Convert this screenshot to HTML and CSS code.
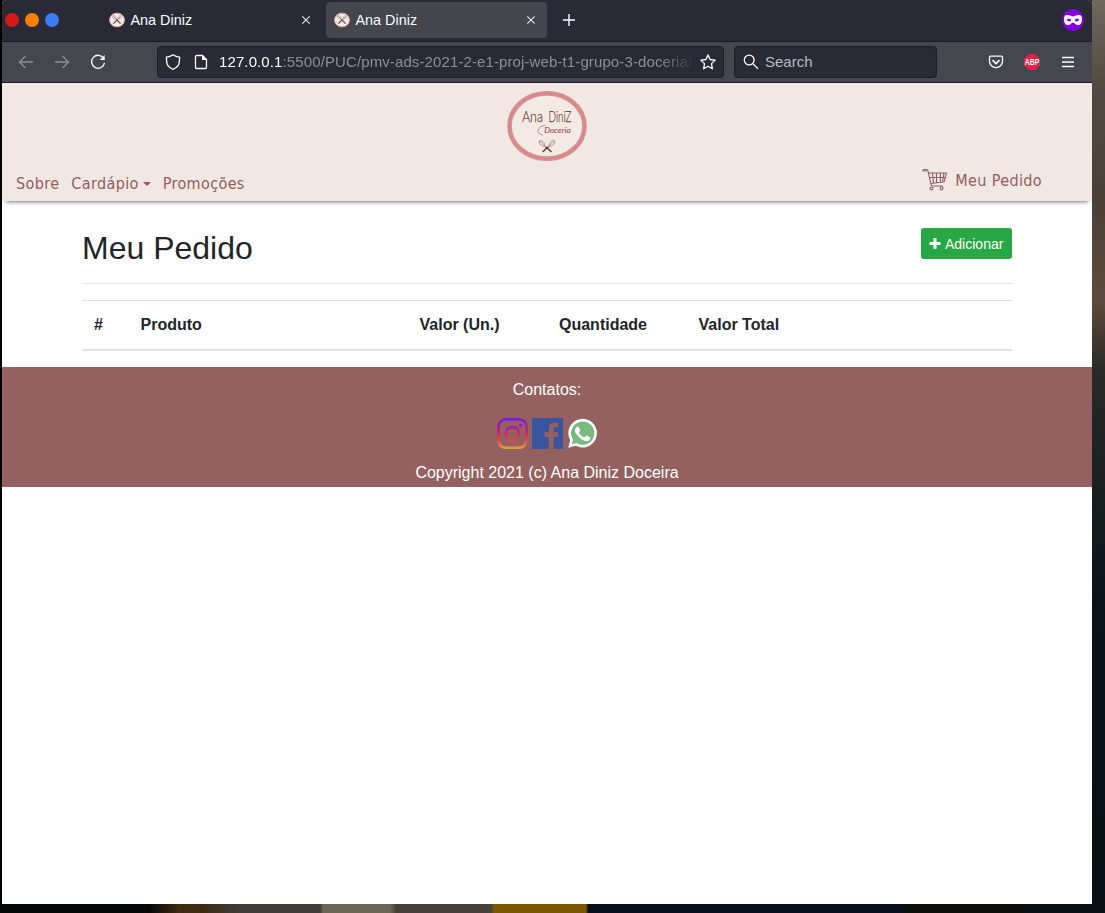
FILE: index.html
```html
<!DOCTYPE html>
<html lang="pt-BR">
<head>
<meta charset="utf-8">
<title>Ana Diniz</title>
<link rel="stylesheet" href="styles.css">
</head>
<body>
<svg class="defs" width="0" height="0">
  <symbol id="whisks" viewBox="0 0 16 16">
    <ellipse cx="8" cy="8" rx="7.5" ry="6.9" fill="#f3e9e5" stroke="#d79a9c"/>
    <path d="M4.5 4.500l7 7M11.500 4.500l-7 7" stroke="#84696a" stroke-width=".8"/>
    <path d="M8 8l3.500 3.500M8 8l-3.500 3.500" stroke="#6d4a4b" stroke-width="1.100"/>
    <path d="M3.400 5.400q-.6-2.200 1.600-1.900 2 .6 2.300 3.700-3.100-.2-3.900-1.800zM12.600 5.400q.6-2.200-1.600-1.900-2 .6-2.300 3.700 3.100-.2 3.900-1.800z" fill="none" stroke="#b69b99" stroke-width=".7"/>
  </symbol>
  <symbol id="close" viewBox="0 0 10 10"><path d="M1.300 1.300l7.400 7.400M8.700 1.300l-7.400 7.400" stroke="#e8e8ea" stroke-width="1.100"/></symbol>
</svg>
<div class="window">
  <div class="tabs">
    <div class="controls"><i class="red"></i><i class="orange"></i><i class="blue"></i></div>
    <div class="tab"><svg class="favicon"><use href="#whisks"/></svg><span>Ana Diniz</span><svg class="close"><use href="#close"/></svg></div>
    <div class="tab active"><svg class="favicon"><use href="#whisks"/></svg><span>Ana Diniz</span><svg class="close"><use href="#close"/></svg></div>
    <svg class="plus" viewBox="0 0 12 12" width="12" height="12"><path d="M6 0v12M0 6h12" stroke="#fbfbfe" stroke-width="1.400"/></svg>
    <svg class="mask" viewBox="0 0 22 22" width="22" height="22"><circle cx="11" cy="11" r="11" fill="#8000d7"/><path fill-rule="evenodd" fill="#fff" d="M2.100 8.200Q2.300 6 5 6q3.200.1 6 1.400Q13.800 6.100 17 6q2.700 0 2.900 2.200.5 7.500-3.500 7.800-2.600.2-4.200-1.900-1.200-1.200-2.400 0Q8.200 16.200 5.600 16q-4-.3-3.500-7.800zM4.700 11q2.200 2.800 4.700.2Q7 7.800 4.700 11zM12.600 11.200q2.500 2.600 4.700-.2-2.300-3.200-4.700.2z"/></svg>
  </div>
  <div class="toolbar">
    <div class="history">
      <svg class="dim" viewBox="0 0 16 16"><path d="M15 8H1.500M7.500 2L1.500 8l6 6"/></svg>
      <svg class="dim" viewBox="0 0 16 16"><path d="M1 8h13.500M8.500 2l6 6-6 6"/></svg>
      <svg viewBox="0 0 16 16"><path d="M13.700 4.500A6.500 6.500 0 1 0 14.500 8.800"/><path d="M14.700 1v5H9.700z" fill="#fbfbfe" stroke="none"/></svg>
    </div>
    <div class="field address">
      <svg viewBox="0 0 16 16"><path d="M8 .8Q11 3 14.500 3.100q.4 7.500-2.800 10Q10 14.600 8 15.300q-2-.7-3.700-2.200-3.200-2.500-2.800-10Q5 3 8 .8z"/></svg>
      <svg viewBox="0 0 16 16"><path d="M3.500 1.500h6l4 4v7.800q0 1.200-1.200 1.200H3.700q-1.200 0-1.200-1.200V2.700q0-1.200 1-1.200z"/><path d="M9 1v5h5z" fill="#fbfbfe" stroke="none"/></svg>
      <span class="url"><b>127.0.0.1</b>:5500/PUC/pmv-ads-2021-2-e1-proj-web-t1-grupo-3-doceria/</span>
      <svg class="star" viewBox="0 0 16 16"><path d="M8 .9l2.100 4.600 5.100.6-3.700 3.500.9 5.200L8 12.300l-4.400 2.500.9-5.200L.8 6.100l5.100-.6z" stroke-linejoin="round"/></svg>
    </div>
    <div class="field search">
      <svg viewBox="0 0 16 16"><circle cx="6.200" cy="6" r="4.900"/><path d="M9.800 9.600l5.200 5.100"/></svg><span>Search</span>
    </div>
    <div class="actions">
      <svg viewBox="0 0 16 16"><path d="M2.500 2.200h11q1 0 1 1v4a6.500 6.500 0 0 1-13 0v-4q0-1 1-1z"/><path d="M4.500 6.200L8 9.500l3.500-3.300" stroke-width="1.700"/></svg>
      <svg viewBox="0 0 16 16"><path d="M4.700 0h6.600L16 4.700v6.600L11.300 16H4.700L0 11.300V4.700z" fill="#ed1e45" stroke="none"/><text x="8" y="11" text-anchor="middle" textLength="14.500" lengthAdjust="spacingAndGlyphs" class="abp">ABP</text></svg>
      <svg viewBox="0 0 16 16"><path d="M2 3.500h12M2 8h12M2 12.500h12" stroke-width="1.400"/></svg>
    </div>
  </div>
  <main class="page">
    <header class="site-header">
      <svg class="logo" viewBox="0 0 80 70" width="80" height="70">
        <ellipse cx="40" cy="35" rx="37.500" ry="32.700" fill="#f3eae5" stroke="#d98e90" stroke-width="4.700"/>
        <ellipse cx="40" cy="35" rx="37.500" ry="32.700" fill="none" stroke="#c67679" stroke-width=".9" stroke-dasharray="1 1.200"/>
        <text x="15" y="31" class="brand" textLength="21" lengthAdjust="spacingAndGlyphs">Ana</text>
        <text x="41.500" y="31" class="brand" textLength="23" lengthAdjust="spacingAndGlyphs">DiniZ</text>
        <path d="M38.500 34.500q-6 .5-7.500 4.500-.8 4 5 5" fill="none" stroke="#ae6267" stroke-width=".7"/>
        <text x="37" y="42" class="script" textLength="27" lengthAdjust="spacingAndGlyphs">Doceria</text>
        <g fill="none" stroke="#9b7774" stroke-width=".7"><path d="M32.500 50q-1.500 3 2.300 4.600l4.200 1.900q-2-6.400-4.500-7.200-1.500-.5-2 .7zM47.500 50q1.500 3-2.300 4.600L41 56.500q2-6.400 4.500-7.200 1.500-.5 2 .7zM33 50l6 6.500M47 50l-6 6.500"/></g>
        <path d="M39 56l5.500 5M41 56l-5.500 5" stroke="#653c3e" stroke-width="1.500"/>
      </svg>
      <nav>
        <a>Sobre</a><a>Cardápio<i class="caret"></i></a><a>Promoções</a>
        <a class="order"><svg class="cart" viewBox="0 0 26 22" width="26" height="22" fill="none" stroke="#935c60" stroke-width="1.100"><path d="M5 2H1.500Q.4 1 1.500.5H4q1.500 0 2 1.500l3 13.500q.3 1.500 1.500 1.500H21M6 4h18.500L22.200 12.700 8.500 14.500M7 8.500h16M10.500 4l1 10M14.500 4v9.500M18.500 4v9M22 4l-1.500 8.700"/><circle cx="9.500" cy="19.500" r="1.500"/><circle cx="19.500" cy="19.500" r="1.500"/></svg>Meu Pedido</a>
      </nav>
    </header>
    <section class="content">
      <div class="heading"><h2>Meu Pedido</h2><button><svg viewBox="0 0 11 11" width="12" height="11"><path d="M4 0h3v4h4v3H7v4H4V7H0V4h4z" fill="#fff"/></svg>Adicionar</button></div>
      <table>
        <colgroup><col class="c5"><col class="c30"><col class="c15"><col class="c15"><col class="c15"><col></colgroup>
        <thead><tr><th>#</th><th>Produto</th><th>Valor (Un.)</th><th>Quantidade</th><th>Valor Total</th><th></th></tr></thead>
      </table>
    </section>
    <footer>
      <p>Contatos:</p>
      <div class="social">
        <svg viewBox="0 0 31 31"><defs><linearGradient id="ig" x1="0" y1="0" x2="0" y2="31" gradientUnits="userSpaceOnUse"><stop offset="0" stop-color="#7024c4"/><stop offset=".25" stop-color="#a020a5"/><stop offset=".5" stop-color="#c92674"/><stop offset=".75" stop-color="#d95248"/><stop offset="1" stop-color="#e7a13e"/></linearGradient></defs><g fill="none" stroke="url(#ig)" stroke-width="2.800"><rect x="1.400" y="1.400" width="28.200" height="28.200" rx="7.500"/><circle cx="15.500" cy="15.500" r="6.600"/></g><circle cx="23.700" cy="7.300" r="1.900" fill="#a020a5"/></svg>
        <svg viewBox="0 0 31 31"><path fill-rule="evenodd" fill="#3a559f" d="M0 0h31v31H21.500V19h4.200l.6-4.700h-4.800v-3q0-2.300 2.300-2.300h2.500V4.800q-9.600-1.500-9.600 5.700v3.800h-4.200V19h4.200v12H0z"/></svg>
        <svg viewBox="0 0 31 31"><path d="M1.200 29.800l2-7.600A14.300 14.300 0 1 1 9 27.800z" fill="#fff"/><path d="M4.800 26.200l1.200-4.500A11.700 11.700 0 1 1 9.400 25z" fill="#79ba7f"/><path d="M9.500 9q1.200-1 2.200 0l1.500 3q.2.900-1.300 2.400 1.700 3.500 5.700 5 1.500-2 2.100-1.800l3.500 1.800q.2 3.600-3.800 3.600-3.700-.2-8-4.500-3.400-3.500-3.400-6 0-2.400 1.500-3.500z" fill="#fff"/></svg>
      </div>
      <p>Copyright 2021 (c) Ana Diniz Doceira</p>
    </footer>
  </main>
</div>
</body>
</html>
```

FILE: styles.css
```css
* { box-sizing: border-box; }
body {
  margin: 0;
  height: 913px;
  padding: 0 13px 9px 2px;
  overflow: hidden;
  font-family: "Liberation Sans", Arial, sans-serif;
  background:
    linear-gradient(90deg, #050707 0 150px, #3d2a11 178px 200px, #3e3d39 240px 320px, #6a6654 323px 390px, #45403a 396px 491px, #7a5600 494px 586px, #07101a 588px 900px, #0c0d09 910px 1020px, #081014 1030px) 0 904px / 1105px 9px no-repeat,
    linear-gradient(#71675d 0, #51483f 90px, #4b4038 210px, #5d4b3c 300px, #292a27 370px, #1c2122 470px, #0a1418 600px, #070f13 904px) 1092px 0 / 13px 904px no-repeat,
    #000;
}
.defs { position: absolute; }
.window { height: 904px; background: #fff; border-radius: 4px 4px 0 0; overflow: hidden; }
.tabs { height: 42px; display: flex; align-items: center; background: #282a36; border-bottom: 1px solid #191a24; padding: 0 8px 1px 3px; }
.controls { display: flex; gap: 6px; width: 96px; }
.controls i { width: 14px; height: 14px; border-radius: 50%; }
.red { background: #d51a1a; }
.orange { background: #ff8000; }
.blue { background: #3a7ef5; }
.tab { width: 221px; height: 36px; display: flex; align-items: center; padding: 0 11px 0 8px; border-radius: 4px; color: #fbfbfe; font-size: 14.4px; margin-right: 4px; }
.tab span { flex: 1; }
.active { background: #44454d; }
.favicon { width: 16px; height: 16px; margin-right: 5.5px; }
.close { width: 10px; height: 10px; }
.plus { margin-left: 12px; }
.mask { margin-left: auto; }
.toolbar { height: 41px; display: flex; align-items: center; background: #45464e; border-bottom: 1px solid #191a24; padding-right: 16px; }
.toolbar svg { width: 16px; height: 16px; fill: none; stroke: #fbfbfe; stroke-width: 1.3; flex: none; }
.history { width: 155px; padding-left: 16px; display: flex; gap: 20px; }
.toolbar .dim { stroke: #8d8e94; }
.field { height: 32px; display: flex; align-items: center; background: #282a36; border: 1px solid #1c1d28; border-radius: 4px; font-size: 15px; }
.field span { padding-bottom: 2px; }
.address { width: 567px; padding: 0 7px; }
.address svg + svg { margin-left: 12px; }
.url { width: 474px; margin: 0 7px 0 10px; color: #8d8e96; white-space: nowrap; overflow: hidden; letter-spacing: .11px; -webkit-mask-image: linear-gradient(90deg, #000 440px, transparent 476px); mask-image: linear-gradient(90deg, #000 440px, transparent 476px); }
.url b { font-weight: 400; color: #fbfbfe; }
.search { width: 203px; margin-left: 10px; padding-left: 8px; gap: 6px; color: #b9bac0; }
.actions { margin-left: auto; display: flex; gap: 20px; }
.toolbar .abp { font: bold 8.5px "Liberation Sans", sans-serif; fill: #fff; stroke: none; }
.page { color: #212529; font-size: 16px; line-height: 24px; }
.site-header { height: 118px; padding-top: 8px; background: #f2e8e3; box-shadow: 0 5px 4px -4px #777; display: flex; flex-direction: column; align-items: center; }
.logo { flex: none; }
.brand { font: 300 15.5px Lato, sans-serif; fill: #6f4244; stroke: #6f4244; stroke-width: .25px; }
.script { font: italic 9px "Liberation Serif", serif; fill: #a3565c; stroke: #a3565c; stroke-width: .2px; }
nav { width: 100%; display: flex; padding: 11px 50px 0 14px; gap: 12px; font-family: "DejaVu Sans Condensed", "DejaVu Sans", sans-serif; font-stretch: condensed; letter-spacing: .37px; color: #935c60; }
nav a { display: flex; align-items: center; height: 24px; }
.caret { margin-left: 4px; border: 4.5px solid transparent; border-top-color: #935c60; border-bottom: 0; }
.order { margin: -3px 0 0 auto; gap: 7px; }
.cart { margin-top: -2px; }
.content { width: 930px; margin: 0 80px 16px; }
.heading { height: 83px; padding-top: 27px; display: flex; justify-content: space-between; align-items: flex-start; border-bottom: 1px solid #e5e5e5; margin-bottom: 16px; }
h2 { margin: 1px 0 0; font-size: 32px; font-weight: 400; line-height: 38px; }
button { display: flex; align-items: center; height: 31px; width: 91px; padding: 0 8px; gap: 4px; border: 0; border-radius: 3px; background: #28a745; color: #fff; font: 14px "Liberation Sans", sans-serif; }
table { width: 100%; table-layout: fixed; border-collapse: separate; border-spacing: 0; }
th { padding: 12px; height: 51px; text-align: left; border-top: 1px solid #dee2e6; border-bottom: 2px solid #dee2e6; white-space: nowrap; }
.c5 { width: 5%; }
.c30 { width: 30%; }
.c15 { width: 15%; }
footer { height: 120px; padding-top: 11px; display: flex; flex-direction: column; align-items: center; background: #946160; color: #fff; }
footer p { margin: 0; }
.social { display: flex; gap: 4px; margin: 16px 0 12px; }
.social svg { width: 31px; height: 31px; }
```
